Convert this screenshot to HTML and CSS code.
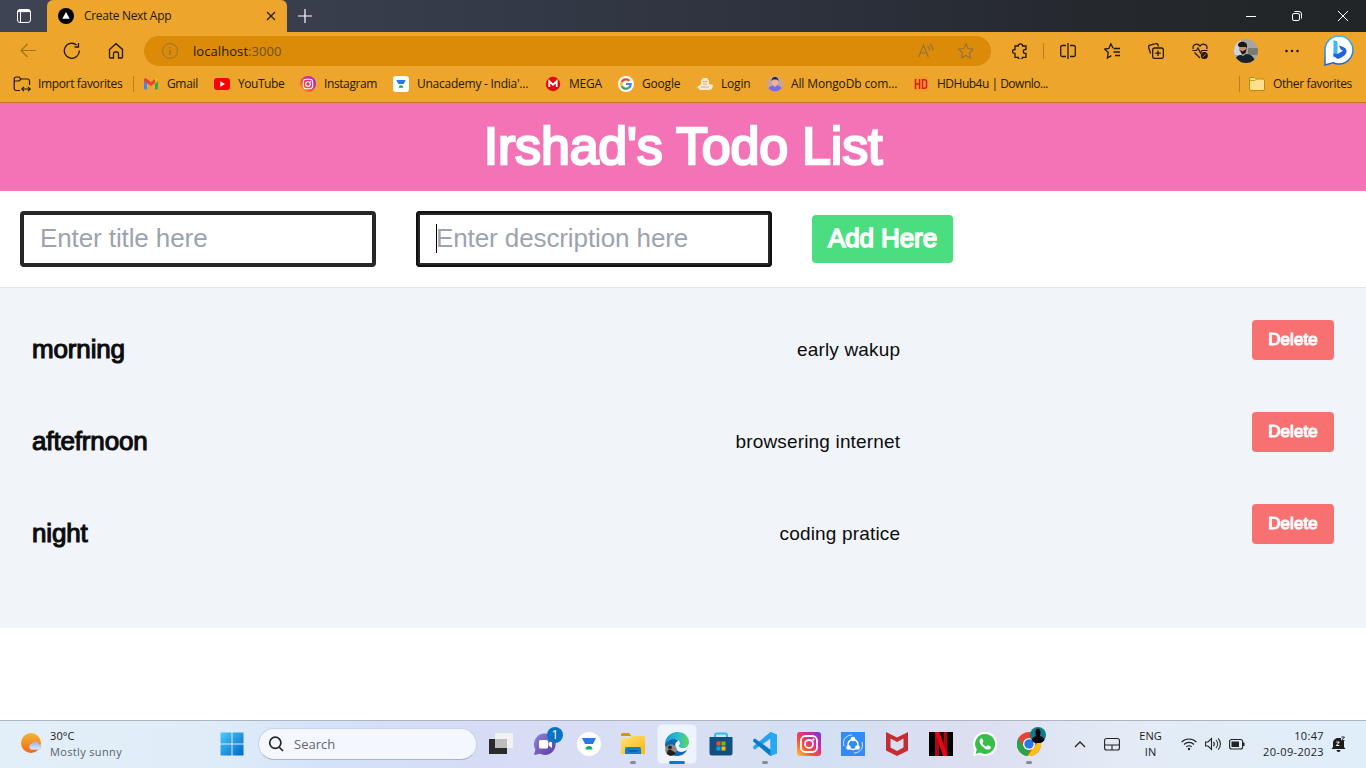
FILE: index.html
```html
<!DOCTYPE html>
<html lang="en">
<head>
<meta charset="utf-8">
<title>Create Next App</title>
<link rel="stylesheet" href="styles.css">
</head>
<body>
<svg width="0" height="0" class="defs" aria-hidden="true">
  <defs>
    <linearGradient id="ig" x1="0" y1="1" x2="1" y2="0"><stop offset="0" stop-color="#ffc83a"/><stop offset=".35" stop-color="#f8522f"/><stop offset=".65" stop-color="#d82a9a"/><stop offset="1" stop-color="#6a36e0"/></linearGradient>
    <linearGradient id="win" x1="0" y1="0" x2="1" y2="1"><stop offset="0" stop-color="#4cc9fa"/><stop offset="1" stop-color="#0067c8"/></linearGradient>
    <linearGradient id="sun" x1="0" y1="0" x2="0" y2="1"><stop offset="0" stop-color="#f2b632"/><stop offset="1" stop-color="#f2661c"/></linearGradient>
    <linearGradient id="cloud" x1="0" y1="0" x2="0" y2="1"><stop offset="0" stop-color="#8fb2ec"/><stop offset="1" stop-color="#dfe9fb"/></linearGradient>
    <linearGradient id="bing" x1="0" y1="0" x2="0" y2="1"><stop offset="0" stop-color="#3fb8f4"/><stop offset="1" stop-color="#1d5fd8"/></linearGradient>
    <linearGradient id="fold" x1="0" y1="0" x2="1" y2="1"><stop offset="0" stop-color="#ffe07a"/><stop offset="1" stop-color="#fbb80f"/></linearGradient>
    <linearGradient id="edge" x1="0" y1="0" x2="1" y2="0"><stop offset="0" stop-color="#1696d8"/><stop offset=".55" stop-color="#2bbccb"/><stop offset="1" stop-color="#63d95a"/></linearGradient>
    <linearGradient id="chat" x1="0" y1="0" x2="1" y2="1"><stop offset="0" stop-color="#8d84dc"/><stop offset="1" stop-color="#5b3aa0"/></linearGradient>
    <symbol id="insta" viewBox="0 0 24 24"><g fill="none" stroke="#fff" stroke-width="1.8"><rect x="4" y="4" width="16" height="16" rx="4.5"/><circle cx="12" cy="12" r="4"/></g><circle cx="16.4" cy="7.6" r="1.2" fill="#fff"/></symbol>
    <symbol id="cup" viewBox="0 0 24 24"><path d="M5 6h14l-3 6H8z" fill="#2878e8"/><path d="M8.500 17.500a3.500 3.500 0 0 1 7 0z" fill="#11ad68"/></symbol>
  </defs>
</svg>

<header class="browser">
  <div class="tabbar">
    <div class="tab-actions">
      <svg class="i16" viewBox="0 0 16 16" fill="none" stroke="#fff"><rect x="1.5" y="1.5" width="13" height="13" rx="2.5"/><path d="M4.500 4v10"/><path d="M2 3h12" stroke-width="2.200"/></svg>
    </div>
    <div class="tab">
      <svg class="i16" viewBox="0 0 16 16"><circle cx="8" cy="8" r="8"/><path d="M8 4l3.7 6.8H4.3z" fill="#fff"/></svg>
      <span class="tab-title">Create Next App</span>
      <svg class="i10" viewBox="0 0 10 10" fill="none" stroke="#241a08" stroke-width="1.2"><path d="M1 1l8 8M9 1L1 9"/></svg>
    </div>
    <svg class="newtab" viewBox="0 0 14 14" fill="none" stroke="#fff" stroke-width="1.2"><path d="M7 0v14M0 7h14"/></svg>
    <div class="window-buttons">
      <svg class="i12" viewBox="0 0 12 12" fill="none" stroke="#fff"><path d="M1 6.5h10"/></svg>
      <svg class="i12" viewBox="0 0 12 12" fill="none" stroke="#fff"><rect x="1.5" y="3.5" width="7" height="7" rx="1.5"/><path d="M3.500 1.500H8a2.500 2.500 0 0 1 2.500 2.500v4.500"/></svg>
      <svg class="i12" viewBox="0 0 12 12" fill="none" stroke="#fff"><path d="M1 1l10 10M11 1L1 11"/></svg>
    </div>
  </div>

  <div class="toolbar">
    <div class="nav">
      <svg class="i18 muted" viewBox="0 0 18 18" fill="none" stroke="currentColor" stroke-width="1.200"><path d="M17 8.500H1.500M8.500 2L2 8.500 8.500 15"/></svg>
      <svg class="i18" viewBox="0 0 18 18" fill="none" stroke="currentColor" stroke-width="1.300"><path d="M16.300 8.500A7.500 7.500 0 1 1 13.600 3M15.500 1v4h-4"/></svg>
      <svg class="i18" viewBox="0 0 18 18" fill="none" stroke="currentColor" stroke-width="1.300"><path d="M2.500 7.400L9 1.700l6.500 5.700V15a1 1 0 0 1-1 1h-3v-4.500a1.500 1.500 0 0 0-1.500-1.500H8a1.500 1.500 0 0 0-1.500 1.500V16h-3a1 1 0 0 1-1-1z"/></svg>
    </div>
    <div class="address">
      <svg class="i16 info" viewBox="0 0 16 16" fill="none" stroke="currentColor"><circle cx="8" cy="8" r="7.500"/><path d="M8 7v5M8 4v1.300" stroke-width="1.300"/></svg>
      <span class="url">localhost<span class="port">:3000</span></span>
      <svg class="i16 read" viewBox="0 0 16 16" fill="none" stroke="currentColor" stroke-width="1.200"><path d="M.700 14L5.500 2l4.800 12M2.400 10h6.200M9.500 3a5 5 0 0 1 2 4.500M12 1a8 8 0 0 1 2.800 6.500"/></svg>
      <svg class="i16 star" viewBox="0 0 16 16" fill="none" stroke="currentColor" stroke-width="1.200"><path d="M8 .800l2.200 4.700 5.100.700-3.700 3.600.900 5.200L8 12.500 3.500 15l.9-5.200L.700 6.200l5.100-.7z"/></svg>
    </div>
    <div class="tools">
      <svg class="i16 t1" viewBox="0 0 16 16" fill="none" stroke="currentColor" stroke-width="1.300"><path d="M3 3h3.200a2.200 2.200 0 0 1 4.400 0H14v3.500h-.8a1.900 1.900 0 0 0 0 3.800h.8v4h-3.400a2.200 2.200 0 0 1-4.400 0H3v-4H2.500a1.900 1.900 0 0 1 0-3.800H3z"/></svg>
      <i class="divider"></i>
      <svg class="i16 t2" viewBox="0 0 16 16" fill="none" stroke="currentColor" stroke-width="1.300"><path d="M6 2.500H2.200a1.500 1.500 0 0 0-1.500 1.500v8a1.500 1.500 0 0 0 1.500 1.500H6M10 2.500h3.800A1.500 1.500 0 0 1 15.300 4v8a1.500 1.500 0 0 1-1.500 1.500H10M8 0v16"/></svg>
      <svg class="i16 t3" viewBox="0 0 16 16" fill="none" stroke="currentColor" stroke-width="1.300"><path d="M9 5L6.800.800 4.900 5.500.7 6l3.500 3.500-.8 5.500 4-2.400M9.500 5.500H16M9.500 9H16M11 12.500h5"/></svg>
      <svg class="i16 t4" viewBox="0 0 16 16" fill="none" stroke="currentColor" stroke-width="1.300"><rect x="4.700" y="5" width="10.700" height="10.400" rx="2"/><path d="M10 7.500v5.400M7.300 10.200h5.400M2.600 10.500L.700 4.700a2 2 0 0 1 1.300-2.500L7.500.700A2 2 0 0 1 10 2l.5 1.500"/></svg>
      <svg class="i16 t5" viewBox="0 0 16 16" fill="none" stroke="currentColor" stroke-width="1.200"><path d="M1.400 6C-.5 2 5-.7 8 3c3-3.700 8.500-1 6.600 3M.5 7.500h4L6 5l2.500 5L10 7.500h5.500M2.500 9.500L8 15"/><circle cx="12.300" cy="12.500" r="3.500" fill="currentColor" stroke="none"/><path d="M10.800 14l3-3" stroke="#eda52c" stroke-width=".8"/></svg>
      <svg class="avatar" viewBox="0 0 24 24"><defs><clipPath id="av"><circle cx="12" cy="12" r="12"/></clipPath></defs><g clip-path="url(#av)"><path fill="#a8a5a0" d="M0 0h24v24H0z"/><path fill="#cdd5dc" d="M0 0h7v16H0z"/><path fill="#777b72" d="M14 9h10v7H14z"/><path fill="#c08d78" d="M5 5l6-1 2 4-1 6-4 2-3-5z"/><path fill="#191717" d="M4 7c-1-5 8-6 9-1v4l-1-2H6zM5.500 11l3 1.500 4-2.500-1 4-3 1.500z"/><path fill="#17222b" d="M1 24c0-6 3-8 6-8l2 1 3-2c6 0 9 5 10 9z"/></g></svg>
      <svg class="i16 t6" viewBox="0 0 16 16" fill="currentColor"><circle cx="2.500" cy="8" r="1.300"/><circle cx="8" cy="8" r="1.300"/><circle cx="13.500" cy="8" r="1.300"/></svg>
      <svg class="bing" viewBox="0 0 30 32"><path d="M15 1a14 14 0 1 1-6 26.700L1 30V15A14 14 0 0 1 15 1z" fill="#fff" stroke="url(#bing)" stroke-width="1.500"/><path d="M9.500 5l4 1.600v13l-4 3z" fill="#3db8f2"/><path d="M9.500 18.500v2.500l4 3c5-1.500 9-4 9-8 0-2.500-2-4-7.500-5.500l1.700 4 2.300 1.200-5.500 3.300z" fill="#2463de"/></svg>
    </div>
  </div>

  <nav class="bookmarks">
    <a class="bm b0"><svg class="i18" viewBox="0 0 18 18" fill="none" stroke="#241a08" stroke-width="1.200"><path d="M7 15.500H3.200A2 2 0 0 1 1.200 13.500V4a2 2 0 0 1 2-2H6l2 2h6.500a2 2 0 0 1 2 2v4M1.200 6H6l2-2M9 14h8M11 11.800L8.800 14l2.200 2.200M15 11.800l2.200 2.200-2.200 2.200"/></svg><span>Import favorites</span></a>
    <i class="divider d0"></i>
    <a class="bm b1"><svg class="i16" viewBox="0 0 16 16"><path fill="#4285f4" d="M1 4h3v9.500H2a1 1 0 0 1-1-1z"/><path fill="#34a853" d="M12 4h3v8.500a1 1 0 0 1-1 1h-2z"/><path fill="#ea4335" d="M1 3.500C1 2 3 2 4 3l4 3 4-3v4L8 10 1 5z"/><path fill="#fbbc04" d="M12 3c1-1 3-1 3 .5V5l-3 2.500z"/></svg><span>Gmail</span></a>
    <a class="bm b2"><svg class="i16" viewBox="0 0 16 16"><rect y="2" width="16" height="12" rx="3" fill="#f00"/><path d="M6.300 5.300L11 8l-4.700 2.700z" fill="#fff"/></svg><span>YouTube</span></a>
    <a class="bm b3"><svg class="i16" viewBox="0 0 16 16"><circle cx="8" cy="8" r="8" fill="url(#ig)"/><use href="#insta" x="1" y="1" width="14" height="14"/></svg><span>Instagram</span></a>
    <a class="bm b4"><svg class="i16" viewBox="0 0 16 16"><rect width="16" height="16" rx="3" fill="#fff"/><use href="#cup" x="0" y="0" width="16" height="16"/></svg><span>Unacademy - India'...</span></a>
    <a class="bm b5"><svg class="i16" viewBox="0 0 16 16"><circle cx="8" cy="8" r="7.200" fill="#e00a12"/><path d="M4.300 11V5.200L8 8.800l3.700-3.600V11" fill="none" stroke="#fff" stroke-width="1.800"/></svg><span>MEGA</span></a>
    <a class="bm b6"><svg class="i16" viewBox="0 0 16 16" fill="none" stroke-width="2.200"><circle cx="8" cy="8" r="8" fill="#fff"/><path stroke="#ea4335" d="M3.700 6A4.700 4.700 0 0 1 11.400 4.800"/><path stroke="#fbbc05" d="M3.700 6a4.700 4.700 0 0 0 0 4"/><path stroke="#34a853" d="M3.700 10a4.700 4.700 0 0 0 7.200 1.700"/><path stroke="#4285f4" d="M10.900 11.700A4.500 4.500 0 0 0 12.700 8H8"/></svg><span>Google</span></a>
    <a class="bm b7"><svg class="i16" viewBox="0 0 16 16"><path d="M0 11l3-2 1-1V5l2-3h4l2 3v3l4 1-1 4-3 1H3z" fill="#f8ead0"/><path d="M5.500 5.500h5M6 8h4M4 11h8" stroke="#d3ac80" fill="none"/></svg><span>Login</span></a>
    <a class="bm b8"><svg class="i16" viewBox="0 0 16 16"><circle cx="8" cy="8" r="7.800" fill="#c9a3ac"/><path d="M1.500 12c2-3 11-4 13 0a8 8 0 0 1-13 0z" fill="#7d68f0"/><path d="M5 3h6v5l-3 3-3-3z" fill="#e7b898"/><path d="M4.500 5C4-.5 12-.5 11.500 5L10 3.500H6z" fill="#2b1f2c"/></svg><span>All MongoDb com...</span></a>
    <a class="bm b9"><svg class="i16" viewBox="0 0 16 16"><path fill="#f29a25" d="M1 1h14v14H1z"/><path d="M2.500 3v10M6.500 3v10M2.500 8h4M9.500 3.700V12.300h2a2 2 0 0 0 2-2V5.700a2 2 0 0 0-2-2z" fill="none" stroke="#d81c1c" stroke-width="1.500"/></svg><span>HDHub4u | Downlo...</span></a>
    <span class="bm-right"><i class="divider"></i><svg class="i16" viewBox="0 0 16 16"><path d="M.500 3A1.500 1.500 0 0 1 2 1.500h3.500L7.500 3H14a1.500 1.500 0 0 1 1.500 1.500V13a1.500 1.500 0 0 1-1.500 1.500H2A1.500 1.500 0 0 1 .500 13z" fill="#ffe08a" stroke="#bd870e"/><path d="M1 4.500h5L7.500 3" fill="none" stroke="#d49d1a"/></svg><span class="other">Other favorites</span></span>
  </nav>
</header>

<main class="page">
  <h1 class="title"><span>Irshad's Todo List</span></h1>
  <form class="todo-form">
    <div class="field"><span>Enter title here</span></div>
    <div class="field focused"><i class="caret"></i><span>Enter description here</span></div>
    <button type="button" class="add">Add Here</button>
  </form>
  <ul class="todos">
    <li class="todo"><div class="todo-body"><h5>morning</h5><h6>early wakup</h6></div><button type="button" class="delete">Delete</button></li>
    <li class="todo"><div class="todo-body"><h5>aftefrnoon</h5><h6>browsering internet</h6></div><button type="button" class="delete">Delete</button></li>
    <li class="todo"><div class="todo-body"><h5>night</h5><h6>coding pratice</h6></div><button type="button" class="delete">Delete</button></li>
  </ul>
</main>

<footer class="taskbar">
  <div class="weather">
    <svg class="i24" viewBox="0 0 24 24"><circle cx="11" cy="11" r="10" fill="url(#sun)"/><path d="M11 17.500a3 3 0 0 1 .5-5.500 4.300 4.300 0 0 1 7.800 1 2.300 2.300 0 0 1 .2 4.500z" fill="url(#cloud)" stroke="#bdd0f3" stroke-width=".5"/></svg>
    <div class="weather-text"><span class="temp">30°C</span><span class="cond">Mostly sunny</span></div>
  </div>
  <svg class="start" viewBox="0 0 24 24" fill="url(#win)"><path d="M.500.500h11v11H.500zM12.500.500h11v11h-11zM.500 12.500h11v11H.500zM12.500 12.500h11v11h-11z"/></svg>
  <div class="search"><svg class="i16" viewBox="0 0 16 16" fill="none" stroke="#262626" stroke-width="1.700"><circle cx="7.300" cy="6.800" r="5.600"/><path d="M11 11l4 4"/></svg><span>Search</span></div>
  <div class="apps">
    <div class="app"><svg viewBox="0 0 24 24"><path fill="#2b2b2b" d="M0 7h18v15H0z"/><path fill="#f2f2f2" d="M6 1h18v15H6z"/><path fill="#bdbdbd" d="M6 7h12v9H6z"/></svg></div>
    <div class="app"><svg viewBox="0 0 24 24"><path d="M12 1.500a10.700 10.700 0 1 1-5 20.200L1 23l1.400-5.500A10.700 10.700 0 0 1 12 1.500z" fill="url(#chat)"/><rect x="6" y="8" width="9" height="8.500" rx="1.500" fill="#fff"/><path d="M15.500 11l3.500-2.500v7.500l-3.500-2.500z" fill="#fff"/></svg><span class="badge">1</span></div>
    <div class="app"><svg viewBox="0 0 24 24"><circle cx="12" cy="12" r="12" fill="#fff"/><use href="#cup" width="24" height="24"/></svg></div>
    <div class="app"><svg viewBox="0 0 24 24"><path d="M0 2.500A1.500 1.500 0 0 1 1.500 1H8l2.500 3H0z" fill="#da940b"/><path d="M0 6h8l2.500-2H22.500A1.500 1.500 0 0 1 24 5.500V22H0z" fill="url(#fold)"/><path d="M4 22v-5a2 2 0 0 1 2-2h12a2 2 0 0 1 2 2v5z" fill="#127ed0"/><path d="M7.500 19h9" stroke="#075b9e" stroke-width="1.500"/></svg><i class="dot"></i></div>
    <div class="app active"><svg viewBox="0 0 24 24"><path d="M0 12C0 5 6 0 12 0c8 0 12 5 12 10 0 4-3 6-6 6-4 0-5-2-3.500-3.500C16 10 13 7 9 7c-4 0-8 2-9 5z" fill="url(#edge)"/><path d="M0 12c1-3 5-5 9-5 3 0 4 1 4 2-5 2-3 11 3 11 2 0 5-1 6.500-2.500C20 22 16 24 12 24 5 24 0 18 0 12z" fill="#0c69b5"/><circle cx="6" cy="18" r="5.800" fill="#8c8881"/><path d="M2 22c0-4 2-5 4-4l5 3c-2 3-6 4-9 1z" fill="#202020"/><circle cx="5" cy="15.500" r="2" fill="#302822"/></svg><i class="dot"></i></div>
    <div class="app"><svg viewBox="0 0 24 24"><path d="M6 6V3.200A1.700 1.700 0 0 1 7.700 1.500h8.600A1.700 1.700 0 0 1 18 3.200V6" fill="none" stroke="#2fb9f0" stroke-width="2"/><path d="M.500 5h23v16a2.500 2.500 0 0 1-2.500 2.500H3A2.500 2.500 0 0 1 .500 21z" fill="#144f83"/><path fill="#f25022" d="M7.500 9.500h4v4h-4z"/><path fill="#7fba00" d="M12.500 9.500h4v4h-4z"/><path fill="#00a4ef" d="M7.500 14.500h4v4h-4z"/><path fill="#ffb900" d="M12.500 14.500h4v4h-4z"/></svg></div>
    <div class="app"><svg viewBox="0 0 24 24"><path d="M17.500 0L24 2.800v18.400L17.500 24 6.500 14 2 17.500.2 16.500v-2L17.500 0z" fill="#22a4ef"/><path d="M17.500 24L.2 9.500v-2L2 6.500l16 12z" fill="#0879c5"/><path d="M17.500 6.500v11L10 12z" fill="#dce0f5"/><path d="M17.500 0L24 2.800v18.400L17.500 24z" fill="#29a8f2"/></svg><i class="dot"></i></div>
    <div class="app"><svg viewBox="0 0 24 24"><rect width="24" height="24" rx="3" fill="url(#ig)"/><use href="#insta" width="24" height="24"/></svg></div>
    <div class="app"><svg viewBox="0 0 24 24" fill="none" stroke="#fff"><path fill="#338bfb" stroke="none" d="M0 0h24v24H0z"/><circle cx="12" cy="12.500" r="5" stroke-width="1.500"/><path d="M3 14C1 8 5 3 11 3M21 10c2 6-2 11-8 11" stroke-width=".8"/><g fill="#fff" stroke="none"><circle cx="12" cy="7" r="2.300"/><circle cx="7.500" cy="15.500" r="2.300"/><circle cx="16.500" cy="15.500" r="2.300"/></g></svg></div>
    <div class="app"><svg viewBox="0 0 24 24"><path d="M1 0l11 5.500L23 0v18.500L12 24 1 18.500zM5.500 6.500v9L12 19l6.500-3.500v-9L12 10z" fill="#c62c32" fill-rule="evenodd"/></svg></div>
    <div class="app"><svg viewBox="0 0 24 24"><path d="M0 0h24v24H0z"/><path fill="#a90912" d="M6 0h4v24H6zM14.500 0h4v24h-4z"/><path fill="#e50914" d="M6 0h4.500l8 24H14z"/></svg></div>
    <div class="app"><svg viewBox="0 0 24 24"><path d="M12 0a12 12 0 1 1-5.500 22.500L0 24l1.600-6A12 12 0 0 1 12 0z" fill="#fff"/><path d="M12 2a10 10 0 1 1-5 18.600L2.500 22l1.300-4.500A10 10 0 0 1 12 2z" fill="#39bd4a"/><path d="M8 6.500c-3 2-1 6 2 8.500 3 3 6 3.500 8 1l-.3-1.500-3-1.300-1.400 1.500c-2-.8-3.300-2.200-4-3.700l1.200-1.500-1.200-3z" fill="#fff"/></svg></div>
    <div class="app"><svg viewBox="0 0 24 24"><circle cx="12" cy="12" r="12" fill="#ea4335"/><path d="M1.500 6L7 15.500l5.500 2.500-2 6A12 12 0 0 1 1.500 6z" fill="#28a44a"/><path d="M17 14.500L23.300 8A12 12 0 0 1 10.500 24z" fill="#fbc116"/><circle cx="12" cy="12" r="6" fill="#fff"/><circle cx="12" cy="12" r="4.700" fill="#2878e8"/></svg><svg class="profile" viewBox="0 0 16 16"><circle cx="8" cy="8" r="8" fill="#117b86"/><path d="M1.500 13c1-3 3-3.500 4.500-4C3-1 13-1 10 9c2 .5 3.500 1 4.500 4a8 8 0 0 1-13 0z" fill="#05090d"/></svg><i class="dot"></i></div>
  </div>
  <div class="tray">
    <svg class="i12 chev" viewBox="0 0 12 12" fill="none" stroke="#222" stroke-width="1.300"><path d="M1 9l5-5 5 5"/></svg>
    <svg class="i16 pad" viewBox="0 0 16 16" fill="none" stroke="#222" stroke-width="1.100"><rect x=".600" y="2.500" width="14.800" height="11.500" rx="2"/><path d="M.600 9h14.800M8 9v5"/></svg>
    <div class="lang"><span>ENG</span><span>IN</span></div>
    <svg class="i16 wifi" viewBox="0 0 16 16" fill="none" stroke="#222" stroke-width="1.100"><path d="M.600 6a10.500 10.500 0 0 1 14.800 0M3 8.500a7 7 0 0 1 10 0M5.300 10.900a3.800 3.800 0 0 1 5.400 0"/><circle cx="8" cy="13" r="1.200" fill="#222" stroke="none"/></svg>
    <svg class="i16 sound" viewBox="0 0 16 16" fill="none" stroke="#222" stroke-width="1.100"><path d="M.600 6H3l3.500-3.500v11L3 10H.600zM8.500 5.800a3.500 3.500 0 0 1 0 4.400M11 4a6 6 0 0 1 0 8M13.200 2.300a8.500 8.500 0 0 1 0 11.400"/></svg>
    <svg class="i16 batt" viewBox="0 0 16 16" fill="none" stroke="#222" stroke-width="1.100"><rect x=".600" y="3.500" width="13" height="9.500" rx="2"/><path d="M2.500 5.500h7.500v5.500H2.500zM14 6.500h1.500v3.500H14z" fill="#222" stroke="none"/></svg>
    <div class="clock"><span>10:47</span><span>20-09-2023</span></div>
    <svg class="i16 bell" viewBox="0 0 16 16"><path d="M2 11V7C2 4 4.500 2 7.500 2H10v3h3v6l1.500 2H.500zM5.500 14h4a2 2 0 0 1-4 0z" fill="#1c1c1c"/><path d="M5.300 6h3l-3 3.500h3" fill="none" stroke="#fff"/><path d="M10.500 1h3l-3 3.500h3" fill="none" stroke="#222"/></svg>
  </div>
</footer>
</body>
</html>
```
FILE: styles.css
```css
* { box-sizing: border-box; margin: 0; padding: 0; }
body { width: 1366px; height: 768px; overflow: hidden; display: flex; flex-direction: column; background: #fff; font-family: "Open Sans", sans-serif; font-size: 12px; }
svg { display: block; flex: none; }
.defs { position: absolute; }
.i10 { width: 10px; height: 10px; }
.i12 { width: 12px; height: 12px; }
.i16 { width: 16px; height: 16px; }
.i18 { width: 18px; height: 18px; }
.i24 { width: 24px; height: 24px; }
.divider { width: 1px; height: 16px; background: #bd8017; }

.browser { height: 103px; flex: none; background: #eda52c; border-bottom: 1px solid #b37c24; color: #241a08; letter-spacing: -.2px; white-space: nowrap; }
.tabbar { height: 32px; display: flex; align-items: center; background: linear-gradient(90deg, #3f4454 0, #373c4b 30%, #2c313c 60%, #25282d 80%, #222527 100%); }
.tab-actions { width: 47px; padding-left: 16px; }
.tab { width: 240px; height: 32px; padding: 0 11px; display: flex; align-items: center; background: #eda52c; border-radius: 6px 6px 0 0; }
.tab-title { flex: 1; margin-left: 10px; padding-bottom: 1px; letter-spacing: -.3px; }
.newtab { width: 14px; height: 14px; margin-left: 11px; }
.window-buttons { margin-left: auto; padding-right: 17px; display: flex; gap: 34px; }
.toolbar { height: 38px; display: flex; align-items: center; }
.nav { display: flex; gap: 26px; width: 144px; padding-left: 19px; }
.muted { color: #a2711f; }
.address { width: 847px; height: 30px; border-radius: 15px; background: #db8b08; display: flex; align-items: center; padding: 0 17px 0 18px; }
.info, .read, .star { color: #94743c; }
.url { flex: 1; margin-left: 15px; font-size: 13px; letter-spacing: .07px; }
.port { color: #6b511f; }
.star { margin-left: 24px; }
.tools { flex: 1; display: flex; align-items: center; }
.t1 { margin-left: 21px; }
.tools .divider { margin-left: 15px; }
.t2 { margin-left: 16px; }
.t3, .t4, .t5 { margin-left: 28px; }
.avatar { width: 24px; height: 24px; margin-left: 26px; }
.t6 { margin-left: 26px; }
.bing { width: 30px; height: 32px; margin-left: 24px; }
.bookmarks { height: 28px; display: flex; align-items: center; padding-left: 13px; }
.bm { display: flex; align-items: center; gap: 8px; flex: none; }
.bm span, .other { padding-bottom: 1px; }
.b0 { width: 120px; gap: 7px; letter-spacing: -.35px; }
.b1 { width: 71px; margin-left: 9px; letter-spacing: -.35px; }
.b2 { width: 86px; letter-spacing: -.45px; }
.b3 { width: 93px; letter-spacing: -.4px; }
.b4 { width: 152px; letter-spacing: -.25px; }
.b5 { width: 73px; }
.b6 { width: 79px; }
.b7 { width: 70px; }
.b8 { width: 146px; letter-spacing: -.13px; }
.b9 { letter-spacing: -.5px; }
.bm-right { margin-left: auto; padding-right: 14px; display: flex; align-items: center; letter-spacing: -.35px; }
.bm-right .i16 { margin: 0 8px 0 9px; }

.page { height: 617px; flex: none; font-family: "Liberation Sans", Arial, sans-serif; color: #0c0c0d; }
.title { height: 88px; background: #f472b6; color: #fff; font-size: 52px; font-weight: 400; line-height: 86px; text-align: center; letter-spacing: -.2px; -webkit-text-stroke: 2.4px #fff; }
.todo-form { height: 97px; display: flex; align-items: center; padding-left: 20px; border-bottom: 1px solid #e5e7eb; }
.field { width: 356px; height: 56px; margin-right: 40px; padding: 0 16px 2px; border: 4px solid #27272a; border-radius: 4px; color: #9ca3af; font-size: 26px; letter-spacing: -.1px; line-height: 46px; display: flex; align-items: center; }
.focused { outline: 2px solid #101010; outline-offset: -2px; }
.caret { width: 1px; height: 29px; margin-right: -1px; background: #000; }
.add, .delete { border: 0; border-radius: 4px; color: #fff; font-family: inherit; }
.add { width: 141px; height: 48px; padding-bottom: 2px; background: #4ade80; font-size: 26px; letter-spacing: -.1px; -webkit-text-stroke: 1.5px #fff; }
.todos { height: 340px; padding: 32px; background: #f1f5f9; list-style: none; }
.todo { height: 40px; margin-bottom: 52px; display: flex; justify-content: space-between; }
.todo-body { width: 868px; display: flex; justify-content: space-between; align-items: center; height: 60px; }
h5 { padding-bottom: 2px; font-size: 26px; font-weight: 400; letter-spacing: -.15px; -webkit-text-stroke: 1.1px #0c0c0d; }
h6 { font-size: 19px; font-weight: 400; letter-spacing: .16px; margin-right: -.16px; }
.delete { width: 82px; height: 40px; background: #f87171; font-size: 17px; letter-spacing: .1px; -webkit-text-stroke: 1px #fff; }

.taskbar { height: 48px; flex: none; border-top: 1px solid #adb5c0; padding-bottom: 1px; display: flex; align-items: center; color: #1c1c1c; background: linear-gradient(90deg, #e2eff8 0, #e0edf8 15%, #d4e2f9 24%, #d6dcf5 34%, #d9dff3 52%, #d3e0f3 60%, #dcdff0 72%, #e3ebf6 82%, #e0eef9 100%); }
.weather { width: 221px; padding-left: 20px; display: flex; gap: 6px; align-items: center; }
.weather-text, .lang, .clock { display: flex; flex-direction: column; line-height: 16px; font-size: 11px; }
.temp { letter-spacing: .1px; }
.cond { color: #5c6267; letter-spacing: .35px; }
.start { width: 24px; height: 24px; margin-left: -1px; }
.search { width: 219px; height: 32px; margin-left: 14px; border-radius: 16px; background: #f4f8fe; border: 1px solid #c9d2e6; border-bottom-color: #a9b5cc; display: flex; align-items: center; gap: 10px; padding-left: 9px; font-size: 13px; color: #61666c; }
.apps { display: flex; gap: 6px; margin-left: 5px; }
.app { width: 38px; height: 38px; position: relative; display: flex; align-items: center; justify-content: center; border-radius: 4px; }
.app > svg { width: 24px; height: 24px; }
.active { background: #eff4fc; box-shadow: 0 0 0 1px #e0e7f5; }
.dot { position: absolute; bottom: -1px; width: 6px; height: 3px; border-radius: 2px; background: #858a93; }
.active .dot { width: 16px; background: #0a7bd4; }
.badge { position: absolute; right: 1px; top: 2px; width: 16px; height: 16px; border-radius: 8px; background: #0973c5; color: #fff; text-align: center; line-height: 16px; }
.app > .profile { position: absolute; width: 16px; height: 16px; right: 2px; top: 2px; }
.tray { margin-left: auto; display: flex; align-items: center; padding-right: 19px; }
.pad { margin-left: 18px; }
.lang { width: 61px; text-align: center; }
.sound { margin-left: 8px; }
.batt { margin-left: 8px; }
.clock { width: 79px; text-align: right; letter-spacing: .35px; }
.bell { margin-left: 7px; }
```
